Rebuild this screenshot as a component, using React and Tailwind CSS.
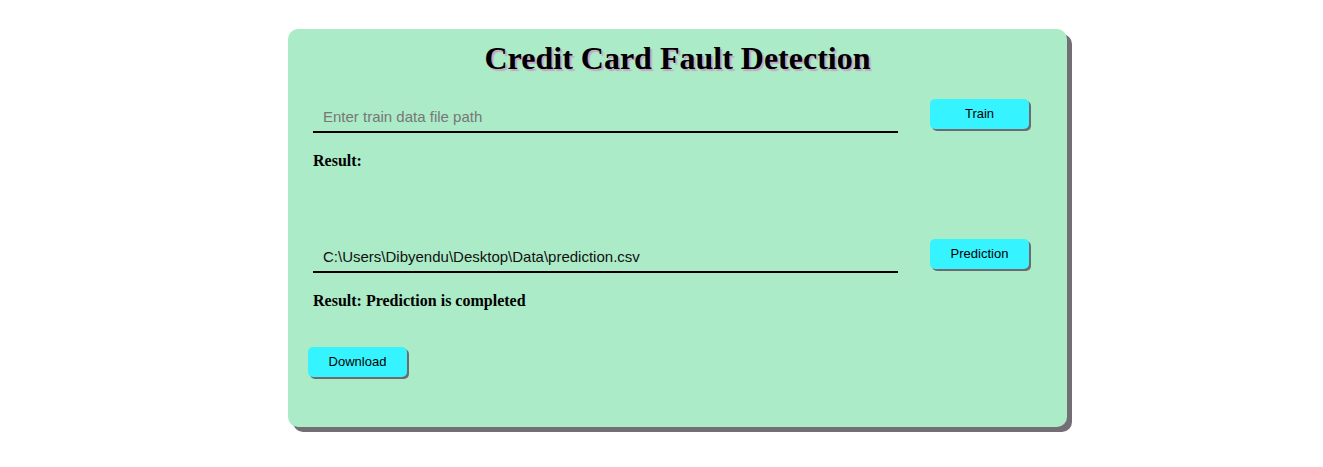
import React from 'react';

const serif = { fontFamily: '"Liberation Serif", "Times New Roman", serif' };
const sans = { fontFamily: '"Liberation Sans", Arial, sans-serif' };

function Btn({ children, className = '' }) {
  return (
    <button
      className={`h-[30px] w-[99px] rounded-[5px] bg-[#35f4ff] text-[13px] text-black shadow-[2px_2px_0_#6e6a70] ${className}`}
      style={sans}
    >
      {children}
    </button>
  );
}

function PathInput({ value, placeholder }) {
  return (
    <div className="w-[585px] border-b-2 border-black pb-[5px] pl-[10px] pt-[2px] text-[15px] leading-[19px]" style={sans}>
      {value ? <span className="text-[#111]">{value}</span> : <span className="text-[#777]">{placeholder}</span>}
    </div>
  );
}

export default function App() {
  return (
    <div className="min-h-[467px] bg-white pt-[29px]">
      <div className="ml-[288px] flex h-[398px] w-[779px] flex-col rounded-[10px] bg-[#abebc7] shadow-[5px_5px_0_#736d74]">
        <h1
          className="mt-[11px] text-center text-[32px] font-bold leading-[36px] text-black [text-shadow:2px_2px_1px_#c9a3c4]"
          style={serif}
        >
          Credit Card Fault Detection
        </h1>

        <div className="mt-[24px] flex items-start pl-[25px]">
          <div className="pt-[5px]">
            <PathInput placeholder="Enter train data file path" />
          </div>
          <Btn className="ml-[32px] mt-[-1px]">Train</Btn>
        </div>
        <p className="mt-[19px] pl-[25px] text-[16px] font-bold leading-[18px] text-black" style={serif}>
          Result:
        </p>

        <div className="mt-[68px] flex items-start pl-[25px]">
          <div className="pt-[7px]">
            <PathInput value="C:\Users\Dibyendu\Desktop\Data\prediction.csv" />
          </div>
          <Btn className="ml-[32px] mt-[1px]">Prediction</Btn>
        </div>
        <p className="mt-[19px] pl-[25px] text-[16px] font-bold leading-[18px] text-black" style={serif}>
          Result: Prediction is completed
        </p>

        <div className="mt-[37px] pl-[20px]">
          <Btn>Download</Btn>
        </div>
      </div>
    </div>
  );
}
